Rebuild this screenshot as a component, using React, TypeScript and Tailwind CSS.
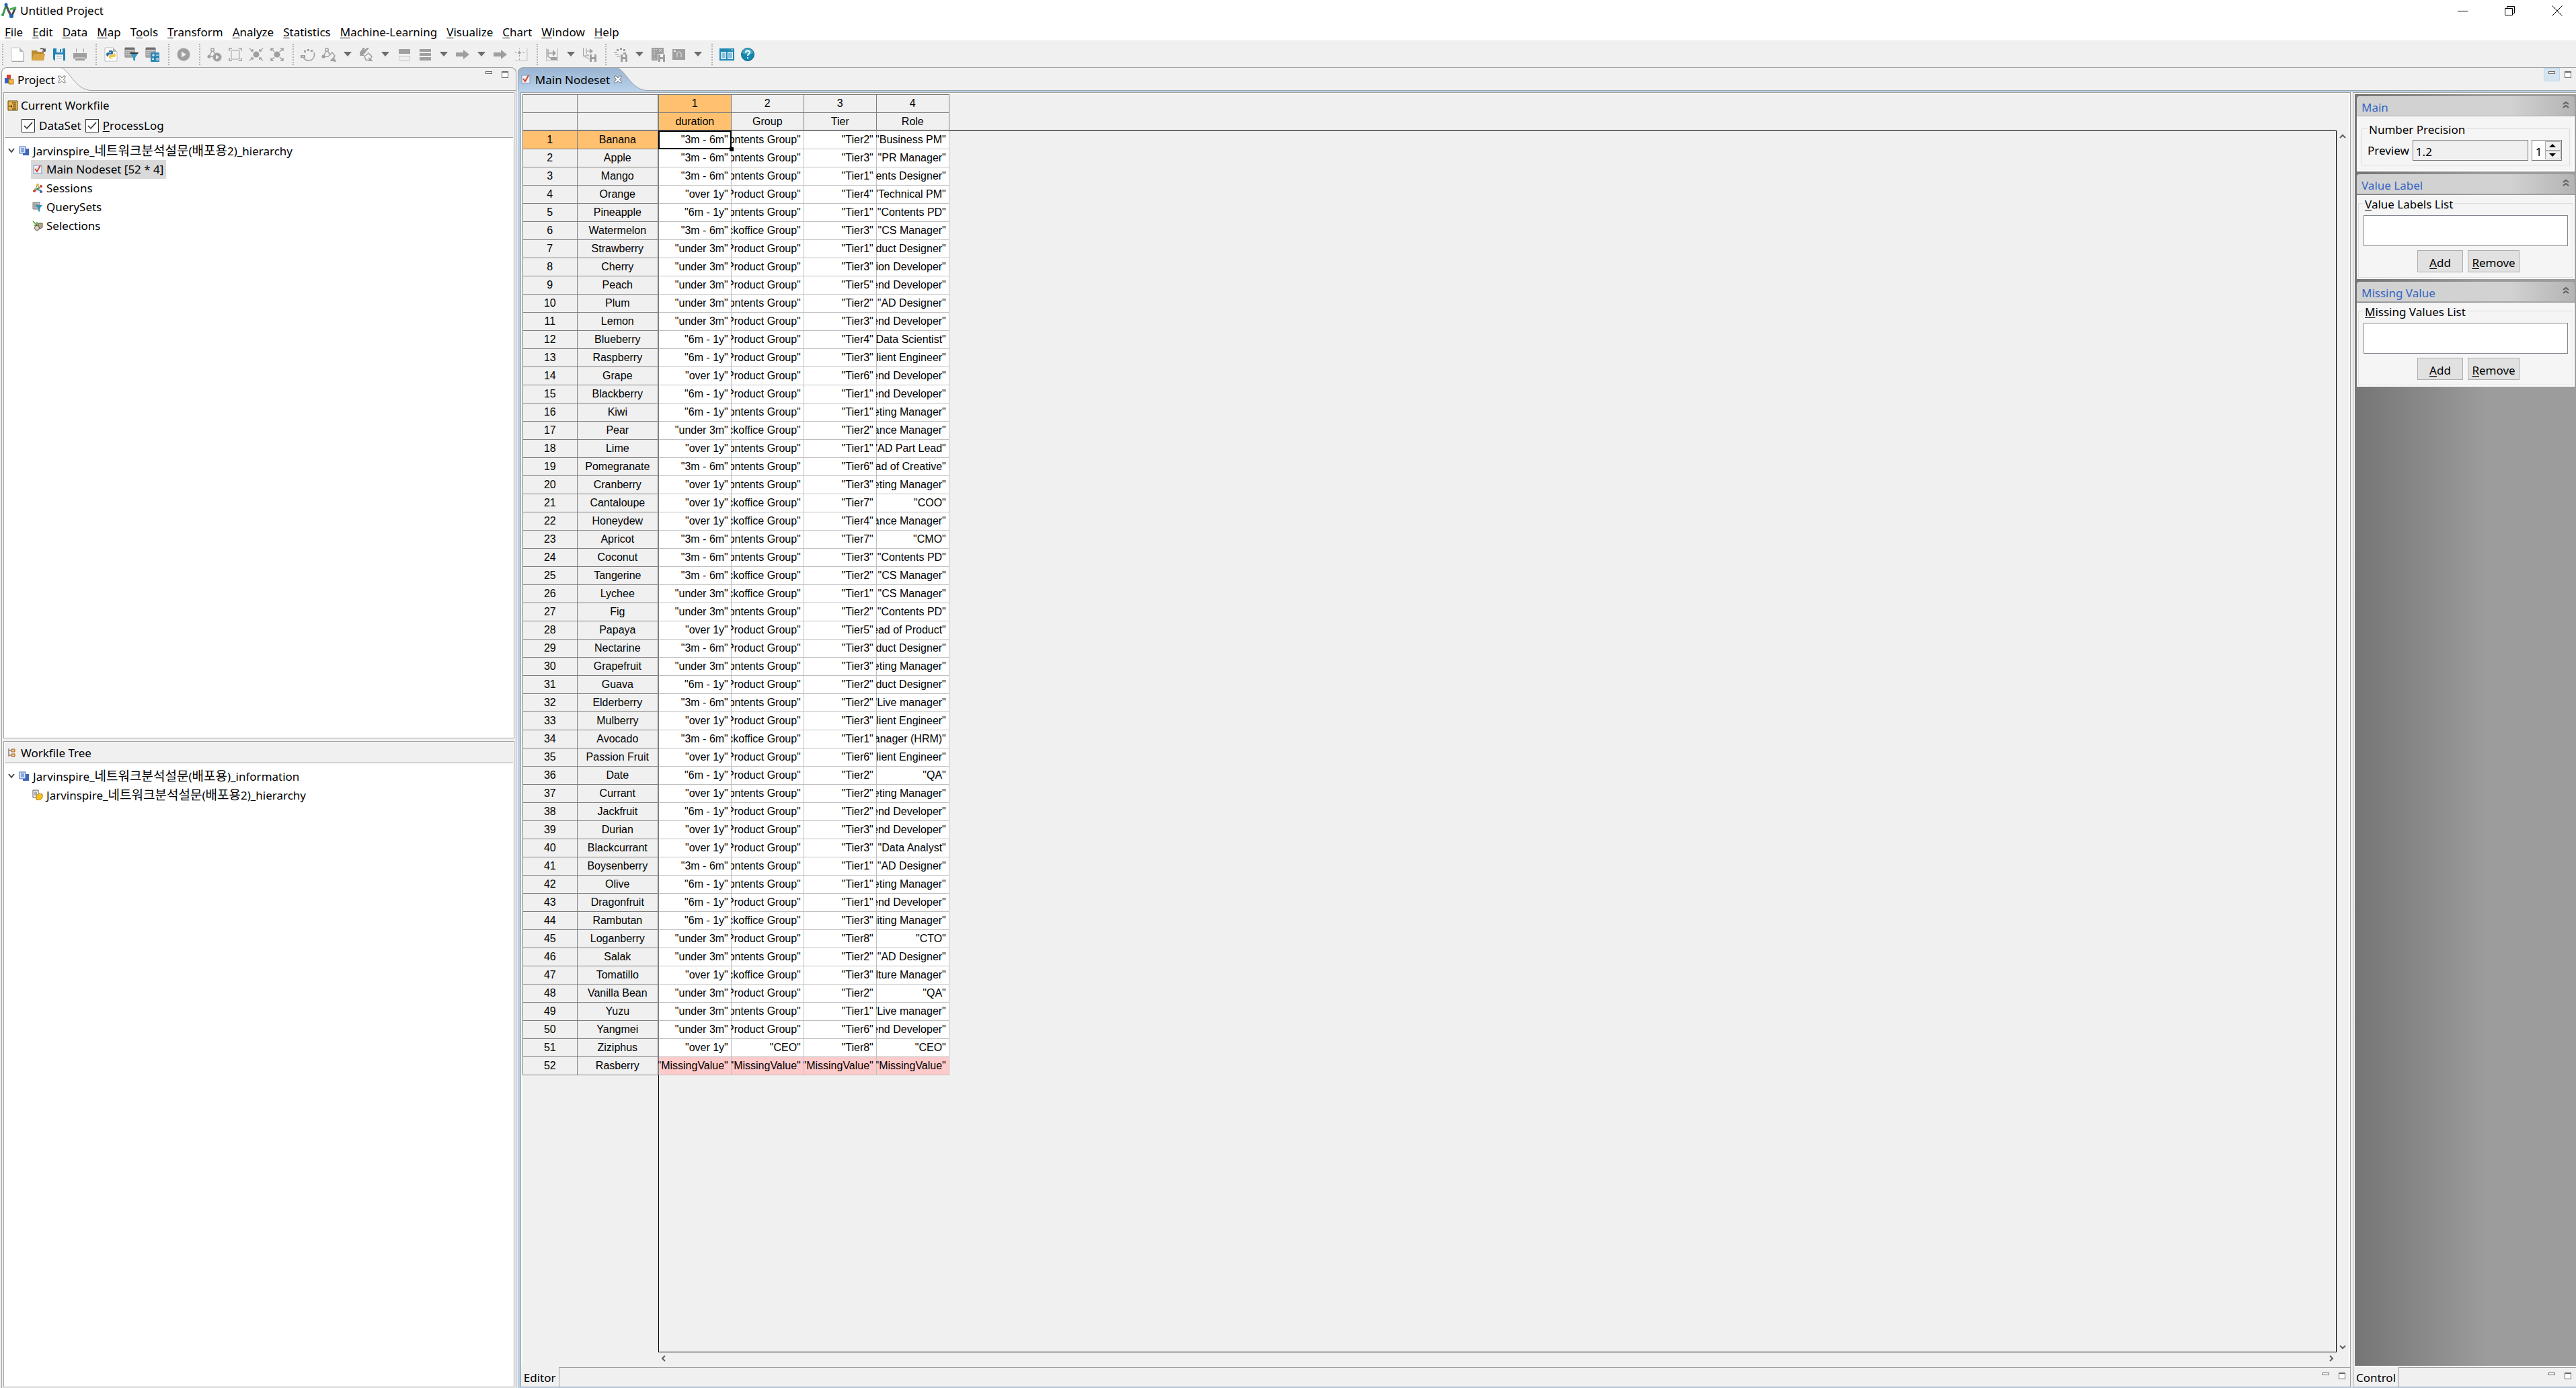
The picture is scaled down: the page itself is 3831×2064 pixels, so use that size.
import type { ReactNode } from "react";

// ============================================================
// Data
// ============================================================

const MENUS = [
  "&File",
  "&Edit",
  "&Data",
  "&Map",
  "T&ools",
  "&Transform",
  "&Analyze",
  "&Statistics",
  "&Machine-Learning",
  "&Visualize",
  "&Chart",
  "&Window",
  "&Help",
];

const COLUMNS = ["duration", "Group", "Tier", "Role"];

const C = "Contents Group";
const P = "Product Group";
const B = "Backoffice Group";

const ROWS = [
  ["Banana", "3m - 6m", C, "Tier2", "Business PM"],
  ["Apple", "3m - 6m", C, "Tier3", "PR Manager"],
  ["Mango", "3m - 6m", C, "Tier1", "Contents Designer"],
  ["Orange", "over 1y", P, "Tier4", "Technical PM"],
  ["Pineapple", "6m - 1y", C, "Tier1", "Contents PD"],
  ["Watermelon", "3m - 6m", B, "Tier3", "CS Manager"],
  ["Strawberry", "under 3m", P, "Tier1", "Product Designer"],
  ["Cherry", "under 3m", P, "Tier3", "Solution Developer"],
  ["Peach", "under 3m", P, "Tier5", "Backend Developer"],
  ["Plum", "under 3m", C, "Tier2", "AD Designer"],
  ["Lemon", "under 3m", P, "Tier3", "Frontend Developer"],
  ["Blueberry", "6m - 1y", P, "Tier4", "Data Scientist"],
  ["Raspberry", "6m - 1y", P, "Tier3", "Client Engineer"],
  ["Grape", "over 1y", P, "Tier6", "Backend Developer"],
  ["Blackberry", "6m - 1y", P, "Tier1", "Backend Developer"],
  ["Kiwi", "6m - 1y", C, "Tier1", "Marketing Manager"],
  ["Pear", "under 3m", B, "Tier2", "Finance Manager"],
  ["Lime", "over 1y", C, "Tier1", "AD Part Lead"],
  ["Pomegranate", "3m - 6m", C, "Tier6", "Head of Creative"],
  ["Cranberry", "over 1y", C, "Tier3", "Marketing Manager"],
  ["Cantaloupe", "over 1y", B, "Tier7", "COO"],
  ["Honeydew", "over 1y", B, "Tier4", "Finance Manager"],
  ["Apricot", "3m - 6m", C, "Tier7", "CMO"],
  ["Coconut", "3m - 6m", C, "Tier3", "Contents PD"],
  ["Tangerine", "3m - 6m", B, "Tier2", "CS Manager"],
  ["Lychee", "under 3m", B, "Tier1", "CS Manager"],
  ["Fig", "under 3m", C, "Tier2", "Contents PD"],
  ["Papaya", "over 1y", P, "Tier5", "Head of Product"],
  ["Nectarine", "3m - 6m", P, "Tier3", "Product Designer"],
  ["Grapefruit", "under 3m", C, "Tier3", "Marketing Manager"],
  ["Guava", "6m - 1y", P, "Tier2", "Product Designer"],
  ["Elderberry", "3m - 6m", C, "Tier2", "Live manager"],
  ["Mulberry", "over 1y", P, "Tier3", "Client Engineer"],
  ["Avocado", "3m - 6m", B, "Tier1", "HR Manager (HRM)"],
  ["Passion Fruit", "over 1y", P, "Tier6", "Client Engineer"],
  ["Date", "6m - 1y", P, "Tier2", "QA"],
  ["Currant", "over 1y", C, "Tier2", "Marketing Manager"],
  ["Jackfruit", "6m - 1y", P, "Tier2", "Backend Developer"],
  ["Durian", "over 1y", P, "Tier3", "Frontend Developer"],
  ["Blackcurrant", "over 1y", P, "Tier3", "Data Analyst"],
  ["Boysenberry", "3m - 6m", C, "Tier1", "AD Designer"],
  ["Olive", "6m - 1y", C, "Tier1", "Marketing Manager"],
  ["Dragonfruit", "6m - 1y", P, "Tier1", "Backend Developer"],
  ["Rambutan", "6m - 1y", B, "Tier3", "Recruiting Manager"],
  ["Loganberry", "under 3m", P, "Tier8", "CTO"],
  ["Salak", "under 3m", C, "Tier2", "AD Designer"],
  ["Tomatillo", "over 1y", B, "Tier3", "Culture Manager"],
  ["Vanilla Bean", "under 3m", P, "Tier2", "QA"],
  ["Yuzu", "under 3m", C, "Tier1", "Live manager"],
  ["Yangmei", "under 3m", P, "Tier6", "Backend Developer"],
  ["Ziziphus", "over 1y", "CEO", "Tier8", "CEO"],
  ["Rasberry", "MissingValue", "MissingValue", "MissingValue", "MissingValue"],
];

// ============================================================
// Small helpers
// ============================================================

// "&File" -> F underlined
function Mnemonic({ text }: { text: string }) {
  const at = text.indexOf("&");
  if (at < 0) return <>{text}</>;
  return (
    <>
      {text.slice(0, at)}
      <span className="underline underline-offset-2">{text[at + 1]}</span>
      {text.slice(at + 2)}
    </>
  );
}

// Hangul is set a little larger than the Latin around it
function MixedText({ text }: { text: string }) {
  return (
    <>
      {text.split(/([가-힣]+)/).map((part, i) =>
        i % 2 ? (
          <span key={i} className="text-[19px]">
            {part}
          </span>
        ) : (
          part
        )
      )}
    </>
  );
}

function Icon({ children }: { children: ReactNode }) {
  return (
    <svg viewBox="0 0 22 22" className="h-[22px] w-[22px]" fill="none" aria-hidden="true">
      {children}
    </svg>
  );
}

function MiniIcon({ children }: { children: ReactNode }) {
  return (
    <svg viewBox="0 0 16 16" className="h-4 w-4 shrink-0" fill="none" aria-hidden="true">
      {children}
    </svg>
  );
}

// ============================================================
// Toolbar icons
// ============================================================

const G = "#9f9f9f";

const gridSheet = (
  <>
    <path d="M1 1h14v14H1z" fill="#e8e8e8" stroke="#777" />
    <path d="M1 1h14v3H1z" fill="#6f6f6f" />
    <path d="M1 7h14M1 10h14M1 13h14M4 3v12M7 3v12M10 3v12M13 3v12" stroke="#8c8c8c" />
  </>
);

const nodeGraph = (
  <>
    <path d="M8 4 3 14M8 4l6 9M3 14h8" stroke={G} strokeWidth="1.5" />
    <circle cx="8" cy="4" r="2.3" fill="#f0f0f0" stroke={G} strokeWidth="1.4" />
    <circle cx="3" cy="14" r="2.6" fill={G} />
  </>
);

const floppyOverlay = <path d="M11 11h3v4h4v-4h3v11h-3v-4h-4v4h-3z" fill={G} />;

const icons = {
  newFile: (
    <Icon>
      <path d="M2 1h12l6 6v14H2z" fill="#fff" stroke="#c9c9c9" />
      <path d="M14 1v6h6z" fill="#b5b5b5" />
      <path d="M3 21.500h17.500V8" stroke="#a5a5a5" />
    </Icon>
  ),
  open: (
    <Icon>
      <path d="M1 5h8l1 2h9v13H1z" fill="#b98a33" />
      <path d="M4 10h17l-2 10H1z" fill="#d9a441" />
      <path d="M14 3c3-2 5 0 6 2m1-3v4h-4" stroke="#444" strokeWidth="1.5" />
    </Icon>
  ),
  save: (
    <Icon>
      <path d="M2 2h18v18H4l-2-2z" fill="#2383b4" />
      <path d="M7 2h9v6H7z" fill="#e9f1f5" />
      <path d="M12 3h2v4h-2z" fill="#2383b4" />
      <path d="M5 11h12v9H5z" fill="#f4f4f4" />
      <path d="M7 14h8M7 17h8" stroke="#b5b5b5" />
    </Icon>
  ),
  print: (
    <Icon>
      <path d="M5.500 2v6M16.500 2v6" stroke={G} />
      <path d="M1 9h20v8h-3v3H4v-3H1z" fill={G} />
      <path d="M4 16h14" stroke="#f0f0f0" />
    </Icon>
  ),
  python: (
    <Icon>
      <path d="M2 1h12l6 6v14H2z" fill="#fff" stroke="#bdbdbd" />
      <path d="M14 1v6h6z" fill="#b5b5b5" />
      <path d="M8 5h4q2 0 2 2v3q0 1-2 1H9q-2 0-2 3H6q-2-1-2-3 0-3 3-3h4V7H8z" fill="#2f6f9f" />
      <path d="M14 17h-4q-2 0-2-2v-2q0-1 2-1h3q2 0 2-3h1q2 1 2 3 0 3-3 3h-4v1h3z" fill="#f4c63d" />
    </Icon>
  ),
  filter: (
    <Icon>
      {gridSheet}
      <path d="M8 8h13l-5 8v5l-3-2v-3z" fill="#3a9cc0" />
      <path d="M8 8h13l-1 2H9z" fill="#333" />
    </Icon>
  ),
  calc: (
    <Icon>
      {gridSheet}
      <path d="M8 8h13v14H8z" fill="#2f86b6" />
      <path d="M10 12h4M12 10v4M16 12h4M10 16l3 3m0-3-3 3M16 17h4M16 19h4" stroke="#fff" />
    </Icon>
  ),
  play: (
    <Icon>
      <circle cx="11" cy="11" r="9.500" fill={G} />
      <path d="M8 6.500v9l7-4.500z" fill="#f0f0f0" />
    </Icon>
  ),
  nodePlay: (
    <Icon>
      {nodeGraph}
      <circle cx="15" cy="15" r="6.500" fill={G} />
      <path d="M13 11.500v7l5-3.500z" fill="#f0f0f0" />
    </Icon>
  ),
  frame: (
    <Icon>
      <path d="M5 5h12v13H5z" stroke={G} />
      <path d="M2 6V2h4M16 2h4v4M20 16v4h-4M6 20H2v-4" stroke={G} strokeWidth="1.500" />
    </Icon>
  ),
  shrink: (
    <Icon>
      <circle cx="11" cy="11" r="4.500" fill={G} />
      <path d="m1 2 5 4M21 2l-5 4M1 20l5-4M21 20l-5-4M6 3v3H3M16 3v3h3M6 19v-3H3M16 19v-3h3" stroke={G} strokeWidth="1.500" />
    </Icon>
  ),
  expand: (
    <Icon>
      <circle cx="11" cy="11" r="4.500" fill={G} />
      <path d="m3 3 4 4M19 3l-4 4M3 19l4-4M19 19l-4-4M2 6V2h4M16 2h4v4M2 16v4h4M16 20h4v-4" stroke={G} strokeWidth="1.500" />
    </Icon>
  ),
  rotate: (
    <Icon>
      <path d="M20 8c2 7-2 12-8 12-4 0-7-2-8-6" stroke={G} strokeWidth="1.500" />
      <path d="M0 12h7v4H0zM5 5h3v3H5zM10 3h3v3h-3zM15 4h3v3h-3z" fill={G} />
      <path d="M2 14h3" stroke="#f0f0f0" />
    </Icon>
  ),
  nodes: (
    <Icon>
      {nodeGraph}
      <path d="m11 13 5-5 4 5-3 6M14 20l4-4 3 5z" stroke={G} strokeWidth="1.500" fill="#f0f0f0" />
      <path d="m15 17 6 4h-6z" fill={G} />
    </Icon>
  ),
  swap: (
    <Icon>
      <path d="M1 8 6 1h3L7 5l5-4h3L8 10H1zM1 13h7l-2-3h-4z" fill={G} />
      <path d="m8 14 6-5 5 5-3 6-6-1z" stroke={G} strokeWidth="1.500" />
      <path d="m14 15 7 6h-6z" fill={G} />
    </Icon>
  ),
  rowsTop: (
    <Icon>
      <path d="M3 3h17v7H3z" fill={G} />
      <path d="M3.500 13.500h16v6h-16z" stroke={G} strokeDasharray="1 1" />
    </Icon>
  ),
  rows: (
    <Icon>
      <path d="M3 3h17v4H3zM3 9h17v4H3zM3 15h17v5H3z" fill={G} />
    </Icon>
  ),
  arrow: (
    <Icon>
      <path d="M1 8h11V4l9 7-9 7v-4H1z" fill={G} />
    </Icon>
  ),
  axis: (
    <Icon>
      <path d="M2 20.500h18V2" stroke="#c2c2c2" />
      <path d="M8.500 2v17M2 8.500h16" stroke={G} strokeDasharray="1 1" />
      <path d="M7 7h3v3H7z" fill={G} />
    </Icon>
  ),
  exportDoc: (
    <Icon>
      <path d="M2.500 2v18.500h17V2" stroke="#b5b5b5" />
      <path d="M5 3v11l6 4M5 9h9" stroke={G} strokeWidth="1.500" />
      <path d="M12 4l5 5-5 5zM9 15h9v4H9z" fill={G} />
    </Icon>
  ),
  exportSave: (
    <Icon>
      <path d="M1.500 1v12l9 5M1 13h8M6 2v8l4 3M6 6h7" stroke={G} />
      <path d="m11 2 5 4-5 4z" fill={G} />
      {floppyOverlay}
    </Icon>
  ),
  rotateSave: (
    <Icon>
      <path d="M5 3h3v3H5zM10 1h3v3h-3zM15 3h3v3h-3zM1 8h5v1H1zM3 11h5v1H3zM5 14h5v1H5zM15 8h4v3h-4z" fill={G} />
      {floppyOverlay}
    </Icon>
  ),
  sheetSave: (
    <Icon>
      <path d="M1 1h18v9h-9v10H1z" fill={G} />
      <path d="M4 4h6m2-1 4 4m0-4-4 4M5 7v6m-1 3 3 2" stroke="#f0f0f0" strokeDasharray="2 1" />
      {floppyOverlay}
    </Icon>
  ),
  camera: (
    <Icon>
      <path d="M1 3h19v16H1z" fill={G} />
      <path d="M8 15V9q4-4 6 0v6" stroke="#f0f0f0" />
      <path d="M3 5h3v2H3z" fill="#f0f0f0" />
    </Icon>
  ),
  panes: (
    <Icon>
      <path d="M0 2h22v18H0z" fill="#1f87b2" />
      <path d="M2 7h8v11H2zM12 7h8v11h-8z" fill="#fff" />
      <path d="M3 8h6v9H3zM13 8h6v9h-6z" fill="#86c2dc" />
      <path d="M15 4h1M17 4h1M19 4h1" stroke="#fff" />
    </Icon>
  ),
  help: (
    <Icon>
      <circle cx="11" cy="11" r="9.500" fill="#1586ac" stroke="#0d6688" />
      <path d="M3 9a8 7 0 0 1 16 0q-8 4-16 0z" fill="#42a6c7" />
      <path d="M8 8.500q0-3 3-3t3 2.500c0 2-3 2.500-3 5" stroke="#fff" strokeWidth="2" />
      <path d="M10 15h2v2h-2z" fill="#fff" />
    </Icon>
  ),
};

type ToolName = keyof typeof icons | "drop";

const TOOL_GROUPS: ToolName[][] = [
  ["newFile", "open", "save", "print"],
  ["python", "filter", "calc"],
  ["play"],
  ["nodePlay", "frame", "shrink", "expand"],
  ["rotate", "nodes", "drop", "swap", "drop", "rowsTop", "rows", "drop", "arrow", "drop", "arrow", "axis"],
  ["exportDoc", "drop", "exportSave"],
  ["rotateSave", "drop", "sheetSave", "camera", "drop"],
  ["panes", "help"],
];

// ============================================================
// Tree icons
// ============================================================

const checkDoc = (
  <MiniIcon>
    <path d="M2 2h12v12H2z" fill="#e9f0fa" stroke="#7d93b8" />
    <path d="m4 7 3 4 5-9" stroke="#d9411e" strokeWidth="2" />
  </MiniIcon>
);

const blueDocs = (
  <MiniIcon>
    <path d="M6 5h9v10H6z" fill="#3c66b8" />
    <path d="M1 2h9v10H1z" fill="#dbe7fb" stroke="#3c66b8" />
    <path d="M3 5h5M3 7h5M3 9h5" stroke="#3c66b8" />
  </MiniIcon>
);

const cubes = (
  <MiniIcon>
    <path d="M4 1h6v7H4z" fill="#d8412f" />
    <path d="M1 6h6v8H1z" fill="#3c5fc4" />
    <path d="M7 8h7v7H7z" fill="#f1b83a" stroke="#b37a17" />
  </MiniIcon>
);

const sessions = (
  <MiniIcon>
    <path d="M8 3 3 12M8 3l5 10M3 9l9 3M12 5 4 13" stroke="#7c7c7c" />
    <circle cx="8" cy="3" r="2" fill="#e4b62f" />
    <circle cx="3" cy="12" r="2" fill="#d3402b" />
    <circle cx="13" cy="5" r="2" fill="#d3402b" />
    <circle cx="8" cy="9" r="2" fill="#3f9a44" />
    <circle cx="13" cy="13" r="2" fill="#3159b8" />
  </MiniIcon>
);

const querySets = (
  <MiniIcon>
    <path d="M1 1h10v10H1z" fill="#cfcfcf" stroke="#777" />
    <path d="M1 4h10M1 7h10M4 1v10M7 1v10" stroke="#888" />
    <path d="M5 5h10l-4 5v5l-2-1v-4z" fill="#2f93b8" />
  </MiniIcon>
);

const selections = (
  <MiniIcon>
    <path d="M1 1l6 6M7 2v5H2" stroke="#4d9a2a" strokeWidth="1.500" />
    <path d="M9 4h6v6l-3 2H9z" fill="#b2a58c" stroke="#5c5240" />
    <circle cx="7" cy="11" r="3.500" fill="#ddd6c6" stroke="#5c5240" />
  </MiniIcon>
);

const docFolder = (
  <MiniIcon>
    <path d="M1 1h8v11H1z" fill="#fff" stroke="#555" />
    <path d="M3 4h4M3 6h4M3 8h4" stroke="#555" />
    <path d="m6 9 4-3 5 1v5l-4 4-5-1z" fill="#f2c020" stroke="#a97c0c" />
  </MiniIcon>
);

const workfile = (
  <MiniIcon>
    <path d="M1 1h14v14H1z" fill="#edb54b" stroke="#5a4417" />
    <path d="M7 4h6M8 7h5M8 10h5M7 13h6M2 9h5M5 7l2 2-2 2" stroke="#3b2c0d" />
  </MiniIcon>
);

const treeIcon = (
  <MiniIcon>
    <path d="M2 1v12M2 4h3M2 11h3" stroke="#555" />
    <path d="M6 2h5v4H6zM6 9h5v4H6z" fill="#f0c48a" stroke="#a85b17" />
  </MiniIcon>
);

// ============================================================
// Window chrome
// ============================================================

function TitleBar() {
  return (
    <header className="flex h-9 items-center justify-between bg-white pr-5 pb-1 pl-[2px]">
      <div className="flex items-center gap-1">
        <svg viewBox="0 0 24 24" className="h-6 w-6" fill="none" aria-hidden="true">
          <path d="M2 19 7 4" stroke="#3a9a4f" strokeWidth="3" />
          <path d="m7 4 8 17" stroke="#555" strokeWidth="3.500" />
          <path d="m15 21 6-14" stroke="#444" strokeWidth="3" />
          <path d="m13 10 9-3" stroke="#45b558" strokeWidth="3" />
          <circle cx="7" cy="3" r="2.500" fill="#1c63b7" />
          <circle cx="15" cy="20" r="3" fill="#1c63b7" />
          <circle cx="2" cy="18" r="2" fill="#3a9a4f" />
        </svg>
        <h1>Untitled Project</h1>
      </div>
      <div className="flex items-center gap-[54px]">
        <button aria-label="Minimize" className="h-4 w-4">
          <svg viewBox="0 0 16 16" className="h-4 w-4" stroke="#000" fill="none">
            <path d="M0 8.500h15" />
          </svg>
        </button>
        <button aria-label="Restore" className="h-4 w-4">
          <svg viewBox="0 0 16 16" className="h-4 w-4" stroke="#000" fill="none">
            <path d="M.5 4.500h11v10H.5zM3.500 4V1.500h11v10H12" />
          </svg>
        </button>
        <button aria-label="Close" className="h-4 w-4">
          <svg viewBox="0 0 16 16" className="h-4 w-4" stroke="#000" fill="none">
            <path d="m.5.500 15 15M15.500.500l-15 15" />
          </svg>
        </button>
      </div>
    </header>
  );
}

function Toolbar() {
  return (
    <div className="flex h-10 items-center gap-2 pt-[2px] pl-[3px]">
      {TOOL_GROUPS.map((group, g) => (
        <div key={g} className="flex items-center">
          <span className="mr-[5px] h-8 border-l-2 border-dotted border-[#b4b4b4]" />
          {group.map((name, i) =>
            name === "drop" ? (
              <button key={i} aria-label="More" className="flex h-6 w-[25px] items-center justify-center">
                <svg viewBox="0 0 12 8" className="h-2 w-3" fill="#6d6d6d">
                  <path d="M0 0h12L6 7z" />
                </svg>
              </button>
            ) : (
              <button key={i} aria-label={name} className="flex h-6 w-[31px] items-center justify-center">
                {icons[name]}
              </button>
            )
          )}
        </div>
      ))}
    </div>
  );
}

function PaneButtons({ highlight = false }: { highlight?: boolean }) {
  return (
    <div className="flex">
      <button
        aria-label="Minimize pane"
        className={`flex h-5 w-6 justify-center border pt-1 ${highlight ? "border-[#b9d9f2] bg-[#d7e5f0]" : "border-transparent"}`}
      >
        <span className="h-1 w-[10px] border border-[#666] bg-white" />
      </button>
      <button aria-label="Maximize pane" className="flex h-5 w-6 justify-center pt-[5px]">
        <span className="h-[10px] w-[10px] border border-t-2 border-[#666] bg-white" />
      </button>
    </div>
  );
}

function CloseMark() {
  return (
    <svg viewBox="0 0 12 12" className="h-3 w-3" stroke="#707070" fill="#fff" aria-hidden="true">
      <path d="M1 1h2.500L6 4l2.500-3H11v2L8.500 6 11 9v2H8.500L6 8l-2.500 3H1V9l2.500-3L1 3z" />
    </svg>
  );
}

function FolderTab({ icon, label, active = false }: { icon: ReactNode; label: string; active?: boolean }) {
  return (
    <div className="flex h-full">
      <div
        className={`flex h-full items-center rounded-tl-lg border-t border-l border-[#a0a0a0] pl-[3px] ${
          active ? "bg-linear-to-b from-[#99b4d1] to-[#b9d1ea]" : "bg-linear-to-b from-white to-[#f0f0f0]"
        }`}
      >
        {icon}
        <span className={`pt-[2px] ${active ? "px-[6px]" : "px-1"}`}>{label}</span>
      </div>
      <button aria-label={`Close ${label}`} className="z-10 -mr-3 w-3">
        <CloseMark />
      </button>
      <svg viewBox="0 0 50 35" className="h-full w-[50px]" fill="none" aria-hidden="true">
        <defs>
          <linearGradient id={active ? "tab-on" : "tab-off"} x1="0" y1="0" x2="0" y2="1">
            <stop offset="0" stopColor={active ? "#99b4d1" : "#ffffff"} />
            <stop offset="1" stopColor={active ? "#b9d1ea" : "#f0f0f0"} />
          </linearGradient>
        </defs>
        <path d="M0 .5h4C16 2 26 34.500 50 34.500V35H0z" fill={active ? "url(#tab-on)" : "url(#tab-off)"} />
        <path d="M0 .5h50M4 .5C16 2 26 34.500 50 34.500" stroke="#a0a0a0" />
      </svg>
    </div>
  );
}

// ============================================================
// Left: project explorer
// ============================================================

function TreeRow({
  icon,
  label,
  root = false,
  selected = false,
}: {
  icon: ReactNode;
  label: string;
  root?: boolean;
  selected?: boolean;
}) {
  return (
    <li className={`flex h-7 items-center ${root ? "pl-[5px]" : "pl-10"}`}>
      {root && (
        <svg viewBox="0 0 12 12" className="mr-[3px] h-3 w-3" fill="none" stroke="#444" strokeWidth="2" aria-hidden="true">
          <path d="m2 3 4 5 4-5" />
        </svg>
      )}
      <span className={`flex h-full items-center gap-[5px] pr-1 pl-[2px] ${selected ? "bg-[#d9d9d9]" : ""}`}>
        {icon}
        <span>
          <MixedText text={label} />
        </span>
      </span>
    </li>
  );
}

function CheckBox({ id, text }: { id: string; text: string }) {
  return (
    <span className="flex items-center gap-[6px]">
      <span className="grid h-5 w-5">
        <input
          id={id}
          type="checkbox"
          defaultChecked
          className="col-start-1 row-start-1 h-5 w-5 appearance-none border border-[#333] bg-white"
        />
        <svg viewBox="0 0 20 20" className="pointer-events-none col-start-1 row-start-1" fill="none" stroke="#222" strokeWidth="1.500">
          <path d="m4 10 4 4 8-9" />
        </svg>
      </span>
      <label htmlFor={id}>
        <Mnemonic text={text} />
      </label>
    </span>
  );
}

function ProjectPanel() {
  return (
    <section className="flex w-1/5 flex-col">
      <div className="flex h-[35px]">
        <FolderTab icon={cubes} label="Project" />
        <div className="flex flex-1 justify-end rounded-tr-lg border-t border-r border-b border-[#a0a0a0] pr-1">
          <PaneButtons />
        </div>
      </div>
      <div className="flex flex-1 flex-col gap-1 border-x border-[#a0a0a0] px-[2px] py-[2px]">
        <div className="flex basis-[961px] flex-col border border-[#a0a0a0] bg-white">
          <div className="m-px flex flex-col gap-[6px] border-b border-[#a0a0a0] bg-[#f0f0f0] pt-1 pb-[7px]">
            <div className="flex h-7 items-center gap-1 pl-1">
              {workfile}
              <span>Current Workfile</span>
            </div>
            <div className="flex h-5 items-center gap-[6px] pl-[25px]">
              <CheckBox id="dataset" text="DataSet" />
              <CheckBox id="processlog" text="&ProcessLog" />
            </div>
          </div>
          <ul className="pt-1">
            <TreeRow root icon={blueDocs} label="Jarvinspire_네트워크분석설문(배포용2)_hierarchy" />
            <TreeRow selected icon={checkDoc} label="Main Nodeset [52 * 4]" />
            <TreeRow icon={sessions} label="Sessions" />
            <TreeRow icon={querySets} label="QuerySets" />
            <TreeRow icon={selections} label="Selections" />
          </ul>
        </div>
        <div className="flex basis-[961px] flex-col border border-[#a0a0a0] bg-white">
          <div className="m-px flex h-[31px] items-center gap-1 border-b border-[#a0a0a0] bg-[#f0f0f0] pt-[2px] pl-1">
            {treeIcon}
            <span>Workfile Tree</span>
          </div>
          <ul className="pt-1">
            <TreeRow root icon={blueDocs} label="Jarvinspire_네트워크분석설문(배포용)_information" />
            <TreeRow icon={docFolder} label="Jarvinspire_네트워크분석설문(배포용2)_hierarchy" />
          </ul>
        </div>
      </div>
    </section>
  );
}

// ============================================================
// Centre: nodeset grid
// ============================================================

const headCell = "h-[27px] border-r border-b border-[#7f7f7f] p-0 text-center font-normal";
const hot = "bg-[#ffc06f]";

function NodesetTable() {
  return (
    <table className="z-10 col-span-full col-start-1 row-span-full row-start-1 w-[635px] table-fixed border-separate border-spacing-0 self-start justify-self-start border-t border-l border-[#7f7f7f] font-['Liberation_Sans',Arial,sans-serif] text-base leading-5">
      <colgroup>
        <col className="w-[81px]" />
        <col className="w-[121px]" />
        <col className="w-[108px]" />
        <col className="w-[108px]" />
        <col className="w-[108px]" />
        <col className="w-[108px]" />
      </colgroup>
      <thead className="bg-[#f0f0f0]">
        <tr>
          <th className={headCell} />
          <th className={`${headCell} border-r-2`} />
          {COLUMNS.map((name, i) => (
            <th key={name} className={`${headCell} ${i === 0 ? hot : ""}`}>
              {i + 1}
            </th>
          ))}
        </tr>
        <tr>
          <th className={`${headCell} border-b-2`} />
          <th className={`${headCell} border-r-2 border-b-2`} />
          {COLUMNS.map((name, i) => (
            <th key={name} className={`${headCell} border-b-2 ${i === 0 ? hot : ""}`}>
              {name}
            </th>
          ))}
        </tr>
      </thead>
      <tbody>
        {ROWS.map(([name, ...values], r) => (
          <tr key={name}>
            <th className={`${headCell} ${r === 0 ? hot : "bg-[#f0f0f0]"}`}>{r + 1}</th>
            <th className={`${headCell} border-r-2 ${r === 0 ? hot : "bg-[#f0f0f0]"}`}>{name}</th>
            {values.map((value, c) => (
              <td
                key={c}
                className={`relative h-[27px] border-r border-b border-[#c0c0c0] p-0 ${
                  value === "MissingValue" ? "bg-[#ffcaca]" : "bg-white"
                }`}
              >
                <div className="-ml-px flex justify-end overflow-hidden pr-1 whitespace-nowrap">
                  <span>{`"${value}"`}</span>
                </div>
                {r === 0 && c === 0 && (
                  <>
                    <span className="absolute -inset-px z-10 border-2 border-black" />
                    <span className="absolute -right-1 -bottom-1 z-20 h-[6px] w-[6px] bg-black" />
                  </>
                )}
              </td>
            ))}
          </tr>
        ))}
      </tbody>
    </table>
  );
}

function ScrollArrow({ d, label }: { d: string; label: string }) {
  return (
    <button aria-label={label} className="flex h-[17px] w-[17px] items-center justify-center">
      <svg viewBox="0 0 10 10" className="h-[10px] w-[10px]" fill="none" stroke="#606060" strokeWidth="2">
        <path d={d} />
      </svg>
    </button>
  );
}

function BottomTabs({ label }: { label: string }) {
  return (
    <div className="flex h-[30px] border-b border-[#a0a0a0] leading-7">
      <button className="px-1 pt-[2px]">{label}</button>
      <div className="flex flex-1 justify-end border-t border-l border-[#a0a0a0] pt-[2px]">
        <PaneButtons />
      </div>
    </div>
  );
}

function Editor() {
  return (
    <div className="flex min-w-0 flex-1 flex-col border-x border-t border-[#a0a0a0]">
      <div className="grid flex-1 grid-cols-[202px_1fr_18px] grid-rows-[54px_1fr_22px] border-2 border-b-0 border-white bg-[#f0f0f0]">
        <div className="col-start-2 row-start-2 border border-black" />
        <NodesetTable />
        <div className="col-start-3 row-start-2 flex flex-col items-center justify-between">
          <ScrollArrow label="Scroll up" d="M1 7l4-4 4 4" />
          <ScrollArrow label="Scroll down" d="M1 3l4 4 4-4" />
        </div>
        <div className="col-start-2 row-start-3 flex justify-between">
          <ScrollArrow label="Scroll left" d="M7 1 3 5l4 4" />
          <ScrollArrow label="Scroll right" d="M3 1l4 4-4 4" />
        </div>
      </div>
      <BottomTabs label="Editor" />
    </div>
  );
}

// ============================================================
// Right: control panel
// ============================================================

function Section({ title, children }: { title: string; children: ReactNode }) {
  return (
    <section>
      <h2 className="flex h-[30px] items-center justify-between rounded-t-sm border-b border-[#a8a8ac] bg-linear-to-r from-[#d2d2d2] from-70% to-[#b4b4b4] pt-1 pr-2 pl-[7px] text-[#3465c4]">
        {title}
        <svg viewBox="0 0 10 12" className="mb-2 h-3 w-[10px]" fill="none" stroke="#5c5c5c" strokeWidth="2" aria-hidden="true">
          <path d="m1 5 4-3 4 3M1 10l4-3 4 3" />
        </svg>
      </h2>
      <div className="border-2 border-t-0 border-white bg-[#f5f5f5]">{children}</div>
    </section>
  );
}

function ListSection({ title, legend }: { title: string; legend: string }) {
  return (
    <Section title={title}>
      <fieldset className="mt-px border border-[#dcdcdc] px-[7px] pb-[7px]">
        <legend className="px-[2px] pt-1 leading-5">
          <Mnemonic text={legend} />
        </legend>
        <select multiple aria-label={legend.replace("&", "")} className="mt-[6px] block h-[46px] w-full appearance-none border border-[#828790] bg-white" />
        <div className="mt-[6px] flex h-[33px] justify-center gap-[7px] pl-2">
          <button className="w-[68px] border border-[#adadad] bg-[#e1e1e1] pt-1">
            <Mnemonic text="&Add" />
          </button>
          <button className="w-[77px] border border-[#adadad] bg-[#e1e1e1] pt-1">
            <Mnemonic text="&Remove" />
          </button>
        </div>
      </fieldset>
    </Section>
  );
}

function ControlPanel() {
  return (
    <aside className="flex w-[332px] flex-col border-t border-l border-[#a0a0a0]">
      <div className="flex flex-1 flex-col gap-1 border-t-2 border-b-2 border-l-2 border-[#f8f8f8] bg-linear-to-r from-[#757575] to-[#9c9c9c] to-60% pt-[3px] pr-[2px] pl-[3px]">
        <Section title="Main">
          <div className="px-[5px] pt-[6px] pb-[7px]">
            <fieldset className="border border-[#dcdcdc] px-2 pb-[6px]">
              <legend className="px-[2px] pt-1 leading-5">Number Precision</legend>
              <div className="mt-[5px] flex h-[31px] items-stretch gap-[5px]">
                <label htmlFor="preview" className="pt-1">
                  Preview
                </label>
                <input
                  id="preview"
                  readOnly
                  defaultValue="1.2"
                  className="w-[172px] border border-[#7a7a7a] bg-[#f0f0f0] px-1 pt-1"
                />
                <div className="flex w-[45px] border border-[#7a7a7a] bg-white p-px">
                  <input aria-label="Precision" defaultValue="1" className="w-[18px] pt-1 pl-1" />
                  <div className="flex flex-1 flex-col">
                    <button aria-label="Increase" className="flex flex-1 items-center justify-center border border-[#adadad] bg-[#f0f0f0]">
                      <svg viewBox="0 0 10 5" className="h-[5px] w-[10px]">
                        <path d="M0 5h10L5 0z" />
                      </svg>
                    </button>
                    <button aria-label="Decrease" className="flex flex-1 items-center justify-center border border-[#adadad] bg-[#f0f0f0]">
                      <svg viewBox="0 0 10 5" className="h-[5px] w-[10px]">
                        <path d="M0 0h10L5 5z" />
                      </svg>
                    </button>
                  </div>
                </div>
              </div>
            </fieldset>
          </div>
        </Section>
        <ListSection title="Value Label" legend="&Value Labels List" />
        <ListSection title="Missing Value" legend="&Missing Values List" />
      </div>
      <BottomTabs label="Control" />
    </aside>
  );
}

// ============================================================
// App
// ============================================================

export default function App() {
  return (
    <div className="flex min-h-screen flex-col bg-[#f0f0f0] font-['Noto_Sans','Noto_Sans_CJK_KR',sans-serif] text-[17px] leading-6 text-black">
      <TitleBar />
      <nav className="flex h-6 items-center gap-[14px] bg-white pl-[7px]">
        {MENUS.map((menu) => (
          <button key={menu}>
            <Mnemonic text={menu} />
          </button>
        ))}
      </nav>
      <Toolbar />
      <main className="flex flex-1 gap-[2px] pl-[2px]">
        <ProjectPanel />
        <section className="flex min-w-0 flex-1 flex-col">
          <div className="flex h-[35px]">
            <FolderTab active icon={checkDoc} label="Main Nodeset" />
            <div className="flex flex-1 justify-end border-t border-b border-[#a0a0a0]">
              <PaneButtons highlight />
            </div>
          </div>
          <div className="flex flex-1 flex-col border-t-2 border-b-2 border-l-4 border-[#b9d1ea]">
            <div className="flex flex-1 gap-[3px]">
              <Editor />
              <ControlPanel />
            </div>
          </div>
        </section>
      </main>
    </div>
  );
}
